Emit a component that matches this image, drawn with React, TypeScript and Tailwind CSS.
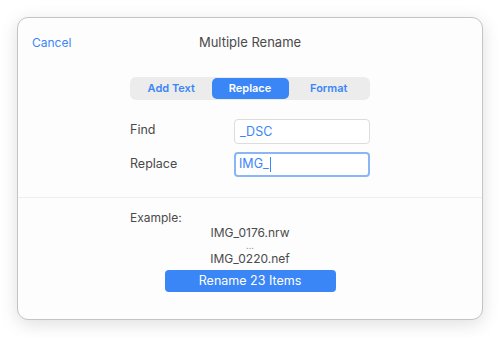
export default function App() {
  return (
    <div className="flex h-[337px] w-[500px] items-start bg-white pl-[17px] pt-[17px] font-['Inter',sans-serif]">
      <div className="flex h-[303px] w-[466px] flex-col rounded-[11px] border border-[#c4c4c4] bg-[#fdfdfd] shadow-[0_4px_18px_rgba(0,0,0,0.13)]">
        <div className="relative flex h-[48px] items-center justify-center pt-[1px]">
          <span className="absolute left-[14px] text-[12px] text-[#3b86f7]">Cancel</span>
          <span className="text-[13px] text-[#4a4a4a]">Multiple Rename</span>
        </div>
        <div className="flex flex-col items-center">
          <div className="mt-[11px] flex h-[23px] w-[240px] items-center rounded-[6px] bg-[#ececec] px-[1px] text-[11px] font-semibold text-[#3b86f7]">
            <div className="flex flex-1 justify-center">Add Text</div>
            <div className="flex h-[21px] w-[77px] items-center justify-center rounded-[5px] bg-[#3b86f7] text-white">Replace</div>
            <div className="flex flex-1 justify-center">Format</div>
          </div>
          <div className="mt-[19px] flex w-[240px] flex-col gap-[8px] text-[12.5px] text-[#4a4a4a]">
            <div className="flex items-center justify-between">
              <span className="-mt-[2px]">Find</span>
              <div className="flex h-[25px] w-[136px] items-center rounded-[4px] border border-[#dcdcdc] bg-white px-[5px] pt-[1px] text-[#3b86f7]">_DSC</div>
            </div>
            <div className="flex items-center justify-between">
              <span>Replace</span>
              <div className="flex h-[25px] w-[136px] items-center rounded-[4px] border-[2px] border-[#8ab6f5] bg-white px-[3px] text-[#3b86f7]">
                IMG_<span className="ml-[1px] h-[15px] w-[1px] bg-[#3b86f7]" />
              </div>
            </div>
          </div>
        </div>
        <div className="mt-[20px] h-px bg-[#efefef]" />
        <div className="flex flex-col items-center pt-[12px] text-[12px] text-[#4a4a4a]">
          <div className="w-[240px] leading-[16px]">Example:</div>
          <div className="leading-[14px]">IMG_0176.nrw</div>
          <div className="text-[9px] leading-[11px] text-[#9a9a9a]">...</div>
          <div className="leading-[16px]">IMG_0220.nef</div>
          <div className="mt-[3px] flex h-[22px] w-[171px] items-center justify-center rounded-[4px] bg-[#3b86f7] text-[12.5px] text-white">Rename 23 Items</div>
        </div>
      </div>
    </div>
  )
}
